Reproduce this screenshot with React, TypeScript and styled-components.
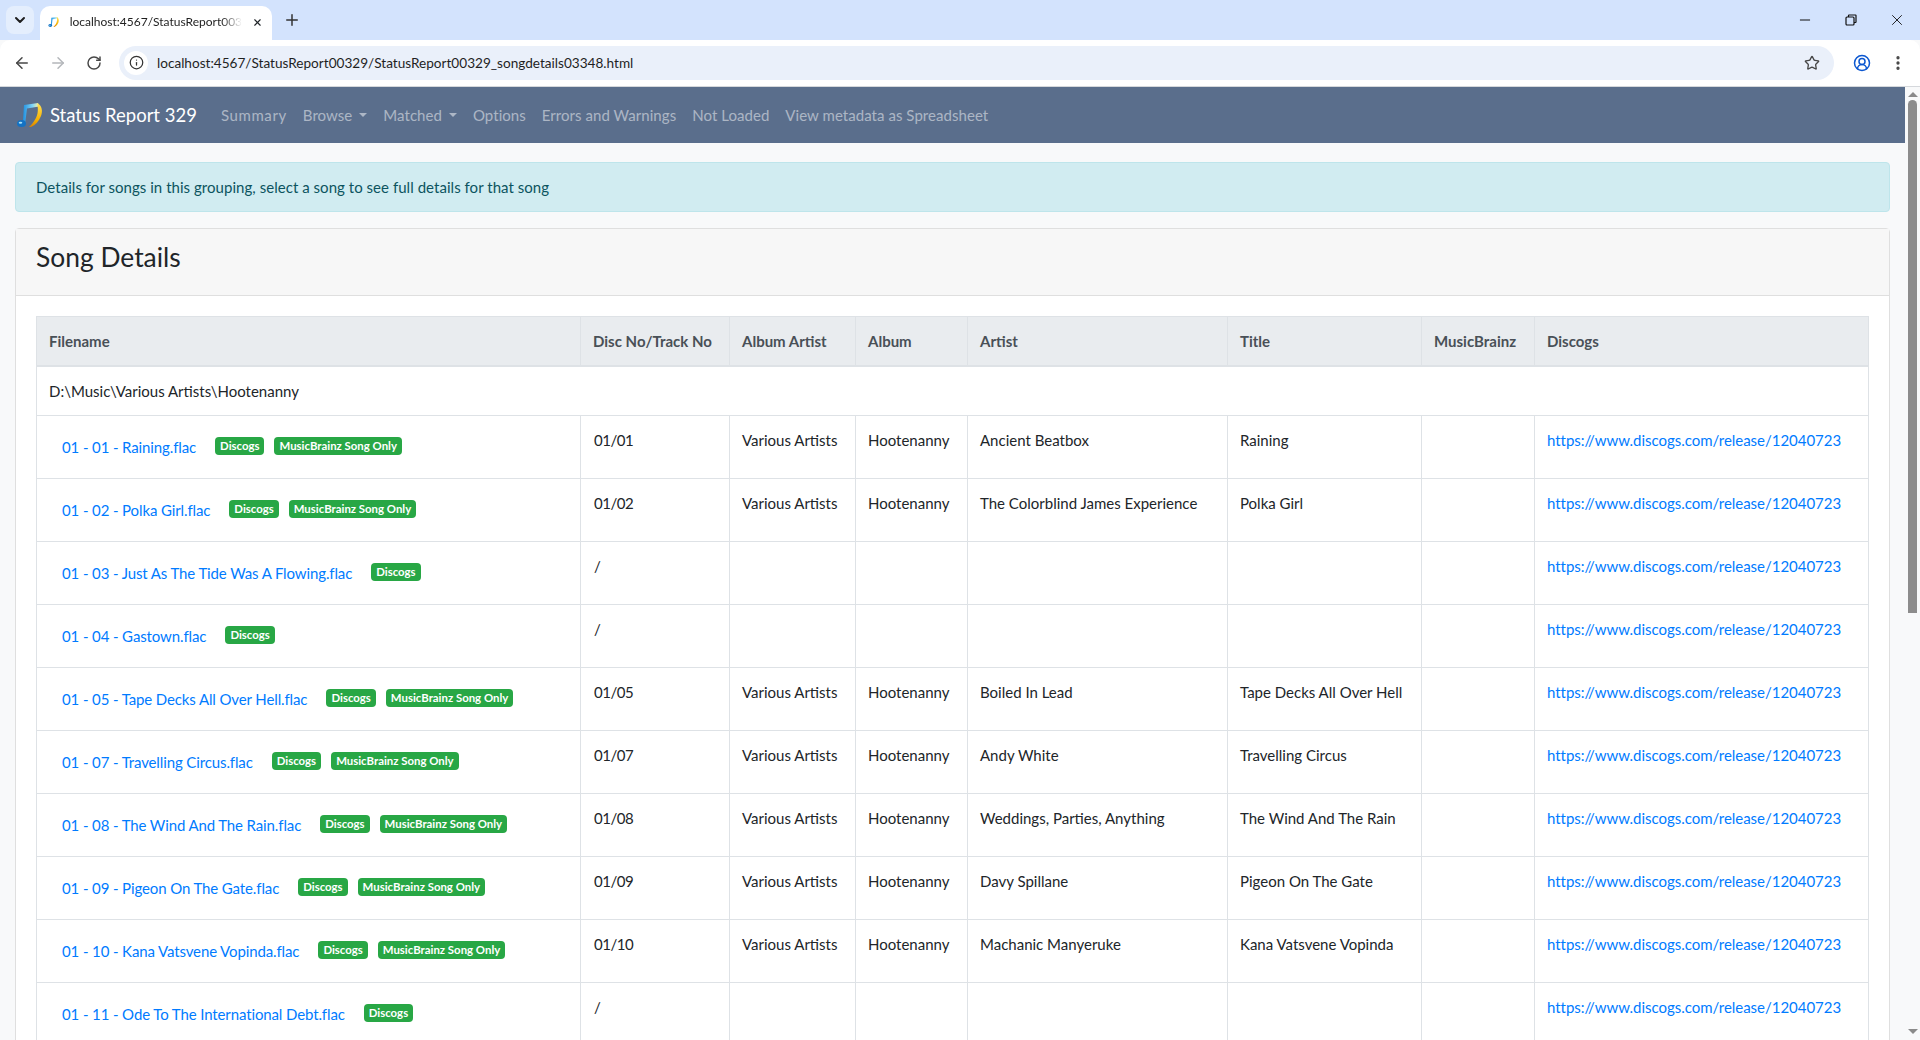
import { ArrowLeft, ArrowRight, ChevronDown, CircleUserRound, Info, Minus, MoreVertical, Plus, RotateCw, Star, X } from 'lucide-react'
import styled, { createGlobalStyle } from 'styled-components'

const FONT = `Lato, 'Noto Sans', sans-serif`
const DISCOGS_URL = 'https://www.discogs.com/release/12040723'

const GlobalStyle = createGlobalStyle`
  html, body {
    margin: 0;
    height: 100%;
    overflow: hidden;
    background: #f8f9fa;
    font-family: ${FONT};
    font-size: 15px;
    line-height: 24px;
    color: #212529;
  }
  * { box-sizing: border-box; }
`

const TabStrip = styled.div`
  height: 40px;
  background: #d3e3fd;
  display: flex;
  align-items: flex-end;
  padding-left: 6px;
`

const TabMenu = styled.div`
  width: 28px;
  height: 28px;
  margin-bottom: 6px;
  border-radius: 8px;
  background: #e4eefd;
  display: flex;
  align-items: center;
  justify-content: center;
  color: #1f1f1f;
`

const Tab = styled.div`
  width: 232px;
  height: 34px;
  margin-left: 6px;
  padding: 0 9px 2px 8px;
  border-radius: 10px 10px 0 0;
  background: #fff;
  display: flex;
  align-items: center;
  gap: 10px;
`

const TabTitle = styled.span`
  flex: 1;
  white-space: nowrap;
  font-size: 12px;
  color: #1f1f1f;
  mask-image: linear-gradient(to right, #000 88%, transparent);
`

const NewTab = styled.div`
  margin: 0 0 6px 11px;
  height: 28px;
  display: flex;
  align-items: center;
  color: #333;
`

const WindowControls = styled.div`
  margin-left: auto;
  height: 40px;
  display: flex;
  align-items: center;
  color: #111;
`

const WindowButton = styled.div`
  width: 46px;
  display: flex;
  justify-content: center;
  align-items: center;
`

const Toolbar = styled.div`
  height: 47px;
  background: #fff;
  border-bottom: 1px solid #d5d8dc;
  border-radius: 10px 10px 0 0;
  display: flex;
  align-items: center;
  padding: 0 0 1px 4px;
`

const NavIcon = styled.div<{ $muted?: boolean }>`
  width: 36px;
  display: flex;
  justify-content: center;
  color: ${p => (p.$muted ? '#b4b7bb' : '#474747')};
`

const Omnibox = styled.div`
  width: 1715px;
  height: 34px;
  margin-left: 7px;
  padding: 0 14px 0 5px;
  border-radius: 17px;
  background: #eaf0fa;
  display: flex;
  align-items: center;
`

const SiteInfo = styled.div`
  width: 24px;
  height: 24px;
  border-radius: 50%;
  background: #fff;
  display: flex;
  align-items: center;
  justify-content: center;
  color: #333;
`

const UrlText = styled.span`
  margin-left: 9px;
  flex: 1;
  font-size: 13.6px;
  color: #1f1f1f;
`

const ProfileIcon = styled.div`
  margin-left: 16px;
  width: 24px;
  display: flex;
  justify-content: center;
  color: #0b57d0;
`

const MenuIcon = styled.div`
  margin-left: 12px;
  width: 24px;
  display: flex;
  justify-content: center;
  color: #474747;
`

const Viewport = styled.div`
  height: 953px;
  display: flex;
  overflow: hidden;
`

const Page = styled.div`
  flex: 1;
  min-width: 0;
  overflow: hidden;
  background: #f8f9fa;
`

const ScrollRail = styled.div`
  width: 15px;
  background: #f8f9fa;
  display: flex;
  flex-direction: column;
  align-items: center;
  padding: 5px 0 6px;
`

const ScrollArrow = styled.div<{ $down?: boolean }>`
  width: 0;
  height: 0;
  border-left: 5px solid transparent;
  border-right: 5px solid transparent;
  ${p => (p.$down ? 'border-top: 5px solid #8a8a8a;' : 'border-bottom: 5px solid #8a8a8a;')}
`

const ScrollThumb = styled.div`
  width: 9px;
  height: 513px;
  margin-top: 3px;
  border-radius: 5px 5px 0 0;
  background: #8c8c8c;
`

const ScrollSpacer = styled.div`
  flex: 1;
`

const Navbar = styled.nav`
  height: 56px;
  background: #5a6e8c;
  display: flex;
  align-items: center;
  padding: 0 16px;
`

const Brand = styled.div`
  display: flex;
  align-items: center;
  gap: 6px;
  font-size: 18.5px;
  color: #fff;
  margin-right: 16px;
`

const NavLink = styled.a<{ $caret?: boolean; $wide?: boolean }>`
  padding: 0 8px;
  color: rgba(255, 255, 255, 0.5);
  display: flex;
  align-items: center;
  letter-spacing: ${p => (p.$wide ? '0.6px' : '0.05px')};
  &::after {
    content: '';
    display: ${p => (p.$caret ? 'block' : 'none')};
    margin-left: 7px;
    border-top: 4.8px solid rgba(255, 255, 255, 0.5);
    border-left: 4.8px solid transparent;
    border-right: 4.8px solid transparent;
  }
`

const Container = styled.div`
  padding: 19px 15px 0;
`

const Alert = styled.div`
  height: 50px;
  padding: 12px 20px;
  margin-bottom: 16px;
  border: 1px solid #bee5eb;
  border-radius: 4px;
  background: #d1ecf1;
  color: #0c5460;
  letter-spacing: 0.04px;
`

const Card = styled.div`
  background: #fff;
  border: 1px solid #dfdfdf;
  border-radius: 4px;
`

const CardHeader = styled.div`
  height: 67px;
  padding: 0 20px 9px;
  background: #f7f7f7;
  border-bottom: 1px solid #dfdfdf;
  display: flex;
  align-items: center;
`

const CardTitle = styled.h3`
  margin: 0;
  font-size: 26.4px;
  font-weight: 400;
  line-height: 1.2;
`

const CardBody = styled.div`
  padding: 20px;
`

const Table = styled.table`
  width: 1832px;
  table-layout: fixed;
  border-collapse: collapse;
  background: #fff;
`

const Column = styled.col<{ $w: number }>`
  width: ${p => p.$w}px;
`

const Th = styled.th`
  height: 49px;
  padding: 0 12px;
  background: #e9ecef;
  border: 1px solid #dee2e6;
  border-bottom-width: 2px;
  color: #495057;
  font-weight: 700;
  text-align: left;
  white-space: nowrap;
`

const Td = styled.td`
  padding: 12px;
  border: 1px solid #dee2e6;
  vertical-align: top;
  white-space: nowrap;
`

const DiscCell = styled(Td)`
  padding-left: 13px;
  letter-spacing: -0.5px;
`

const FileLine = styled.div`
  padding: 7px 0 7px 13px;
  display: flex;
  align-items: center;
`

const FileLink = styled.a`
  color: #007bff;
  text-decoration: none;
  letter-spacing: -0.12px;
`

const UrlLink = styled.a`
  color: #007bff;
  text-decoration: none;
  letter-spacing: -0.03px;
`

const Badge = styled.span`
  margin-left: 19px;
  padding: 3px 5px;
  border-radius: 4px;
  background: #28a745;
  color: #fff;
  font-size: 11.4px;
  font-weight: 700;
  line-height: 12px;
  position: relative;
  top: -1px;
  & + & {
    margin-left: 10px;
  }
`

// blue to gold music note, tab favicon and navbar logo
const NoteLogo = ({ size, id }: { size: number; id: string }) => (
  <svg width={size} height={size} viewBox="0 0 28 28">
    <defs>
      <linearGradient id={`${id}-beam`} x1="0" y1="0" x2="1" y2="0">
        <stop offset="0" stopColor="#1e8fe0" />
        <stop offset="0.6" stopColor="#7fd4f7" />
        <stop offset="1" stopColor="#fff2a0" />
      </linearGradient>
      <linearGradient id={`${id}-gold`} x1="0" y1="0" x2="0" y2="1">
        <stop offset="0" stopColor="#ffe25a" />
        <stop offset="0.7" stopColor="#f6b100" />
        <stop offset="1" stopColor="#d98200" />
      </linearGradient>
    </defs>
    <path d="M8 4 L22 2 L23 5.5 L11 7.5 L9.2 22 L6.8 22 Z" fill={`url(#${id}-beam)`} />
    <path d="M21.5 2 C26 5 27 10 25 15 C23 20 19.5 24 15 26 L13 26 C17.5 22 21.5 16 21.8 10 C22 7 21.5 4.5 21.5 2 Z" fill={`url(#${id}-gold)`} />
    <ellipse cx="5.5" cy="22.5" rx="4.5" ry="3.5" fill="#1372c4" />
    <ellipse cx="4.5" cy="21.8" rx="1.8" ry="1" fill="#a8e2fa" />
  </svg>
)

type Song = {
  file: string
  disc: string
  artist?: string
  title?: string
  brainz?: boolean
}

const songs: Song[] = [
  { file: '01 - 01 - Raining.flac', disc: '01/01', artist: 'Ancient Beatbox', title: 'Raining', brainz: true },
  { file: '01 - 02 - Polka Girl.flac', disc: '01/02', artist: 'The Colorblind James Experience', title: 'Polka Girl', brainz: true },
  { file: '01 - 03 - Just As The Tide Was A Flowing.flac', disc: '/' },
  { file: '01 - 04 - Gastown.flac', disc: '/' },
  { file: '01 - 05 - Tape Decks All Over Hell.flac', disc: '01/05', artist: 'Boiled In Lead', title: 'Tape Decks All Over Hell', brainz: true },
  { file: '01 - 07 - Travelling Circus.flac', disc: '01/07', artist: 'Andy White', title: 'Travelling Circus', brainz: true },
  { file: '01 - 08 - The Wind And The Rain.flac', disc: '01/08', artist: 'Weddings, Parties, Anything', title: 'The Wind And The Rain', brainz: true },
  { file: '01 - 09 - Pigeon On The Gate.flac', disc: '01/09', artist: 'Davy Spillane', title: 'Pigeon On The Gate', brainz: true },
  { file: '01 - 10 - Kana Vatsvene Vopinda.flac', disc: '01/10', artist: 'Machanic Manyeruke', title: 'Kana Vatsvene Vopinda', brainz: true },
  { file: '01 - 11 - Ode To The International Debt.flac', disc: '/' },
]

const columns = [544, 149, 126, 112, 260, 194, 113, 334]
const headers = ['Filename', 'Disc No/Track No', 'Album Artist', 'Album', 'Artist', 'Title', 'MusicBrainz', 'Discogs']
const navLinks = [
  { label: 'Summary', wide: true },
  { label: 'Browse', caret: true },
  { label: 'Matched', caret: true },
  { label: 'Options' },
  { label: 'Errors and Warnings' },
  { label: 'Not Loaded' },
  { label: 'View metadata as Spreadsheet' },
]

const App = () => {
  return (
    <>
      <GlobalStyle />
      <TabStrip>
        <TabMenu>
          <ChevronDown size={16} strokeWidth={3} />
        </TabMenu>
        <Tab>
          <NoteLogo size={16} id="tab" />
          <TabTitle>localhost:4567/StatusReport003</TabTitle>
          <X size={15} strokeWidth={2.5} />
        </Tab>
        <NewTab>
          <Plus size={18} strokeWidth={2} />
        </NewTab>
        <WindowControls>
          <WindowButton>
            <Minus size={16} strokeWidth={1.5} />
          </WindowButton>
          <WindowButton>
            <svg width="12" height="12" viewBox="0 0 12 12" fill="none" stroke="currentColor" strokeWidth="1.2">
              <rect x="1" y="3" width="8" height="8" rx="1" />
              <path d="M3.5 3V1.5a.5.5 0 0 1 .5-.5h6.5a.5.5 0 0 1 .5.5V8a.5.5 0 0 1-.5.5H9" />
            </svg>
          </WindowButton>
          <WindowButton>
            <X size={18} strokeWidth={1.2} />
          </WindowButton>
        </WindowControls>
      </TabStrip>
      <Toolbar>
        <NavIcon>
          <ArrowLeft size={18} strokeWidth={2} />
        </NavIcon>
        <NavIcon $muted>
          <ArrowRight size={18} strokeWidth={2} />
        </NavIcon>
        <NavIcon>
          <RotateCw size={16} strokeWidth={2.2} />
        </NavIcon>
        <Omnibox>
          <SiteInfo>
            <Info size={15} strokeWidth={2} />
          </SiteInfo>
          <UrlText>localhost:4567/StatusReport00329/StatusReport00329_songdetails03348.html</UrlText>
          <Star size={16} strokeWidth={2} color="#474747" />
        </Omnibox>
        <ProfileIcon>
          <CircleUserRound size={18} strokeWidth={2} />
        </ProfileIcon>
        <MenuIcon>
          <MoreVertical size={18} strokeWidth={2.4} />
        </MenuIcon>
      </Toolbar>
      <Viewport>
        <Page>
          <Navbar>
            <Brand>
              <NoteLogo size={28} id="brand" />
              Status Report 329
            </Brand>
            {navLinks.map(link => (
              <NavLink key={link.label} $caret={link.caret} $wide={link.wide}>
                {link.label}
              </NavLink>
            ))}
          </Navbar>
          <Container>
            <Alert>Details for songs in this grouping, select a song to see full details for that song</Alert>
            <Card>
              <CardHeader>
                <CardTitle>Song Details</CardTitle>
              </CardHeader>
              <CardBody>
                <Table>
                  <colgroup>
                    {columns.map((w, i) => (
                      <Column key={i} $w={w} />
                    ))}
                  </colgroup>
                  <thead>
                    <tr>
                      {headers.map(h => (
                        <Th key={h}>{h}</Th>
                      ))}
                    </tr>
                  </thead>
                  <tbody>
                    <tr>
                      <Td colSpan={8}>D:\Music\Various Artists\Hootenanny</Td>
                    </tr>
                    {songs.map(song => (
                      <tr key={song.file}>
                        <Td>
                          <FileLine>
                            <FileLink>{song.file}</FileLink>
                            <Badge>Discogs</Badge>
                            {song.brainz && <Badge>MusicBrainz Song Only</Badge>}
                          </FileLine>
                        </Td>
                        <DiscCell>{song.disc}</DiscCell>
                        <Td>{song.artist && 'Various Artists'}</Td>
                        <Td>{song.artist && 'Hootenanny'}</Td>
                        <Td>{song.artist}</Td>
                        <Td>{song.title}</Td>
                        <Td />
                        <Td>
                          <UrlLink>{DISCOGS_URL}</UrlLink>
                        </Td>
                      </tr>
                    ))}
                  </tbody>
                </Table>
              </CardBody>
            </Card>
          </Container>
        </Page>
        <ScrollRail>
          <ScrollArrow />
          <ScrollThumb />
          <ScrollSpacer />
          <ScrollArrow $down />
        </ScrollRail>
      </Viewport>
    </>
  )
}

export default App
